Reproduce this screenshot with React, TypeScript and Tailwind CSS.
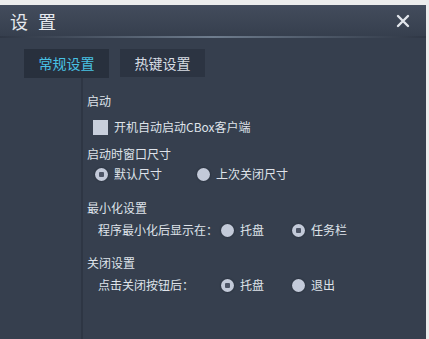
import React, { useState } from "react"

const font = { fontFamily: '"Noto Sans CJK SC", "Liberation Sans", sans-serif' }

const Radio = ({ checked, label, onClick }: { checked: boolean; label: string; onClick: () => void }) => (
  <button onClick={onClick} className="flex items-center gap-[6px] text-left">
    <span className="flex h-[13px] w-[13px] items-center justify-center rounded-full bg-[#c3cad9] shadow-[0_0_2px_#1c222c]">
      {checked && <span className="h-[5px] w-[5px] rounded-[1px] bg-[#4d5566]" />}
    </span>
    <span>{label}</span>
  </button>
)

export default function App() {
  const [tab, setTab] = useState(0)
  const [autoStart, setAutoStart] = useState(false)
  const [winSize, setWinSize] = useState(0)
  const [minTo, setMinTo] = useState(1)
  const [onClose, setOnClose] = useState(0)

  return (
    <div style={font} className="h-[339px] w-[429px] bg-[#ececec] pt-[5px] pr-[3px]">
      <div className="flex h-full flex-col bg-[#363f4e] text-[12px] text-[#dfe3ea]">
        <div className="flex h-[31px] items-center justify-between bg-gradient-to-b from-[#434c5c] to-[#363f4e] pl-[10px] pr-[16px]">
          <div className="flex gap-[10px] text-[18px] leading-none text-[#e6e9ee]">
            <span>设</span>
            <span>置</span>
          </div>
          <svg width="14" height="14" viewBox="0 0 14 14">
            <path d="M2 2 L12 12 M12 2 L2 12" stroke="#e2e6ec" strokeWidth="2.4" strokeLinecap="round" />
          </svg>
        </div>
        <div className="h-[2px] bg-gradient-to-r from-[#2f3745] via-[#6f7d8e] to-[#2f3745]" />

        <div className="flex gap-[11px] pl-[24px] pt-[11px]">
          <button
            onClick={() => setTab(0)}
            className={`h-[29px] w-[85px] text-[14px] ${tab === 0 ? "bg-[#28303d] text-[#48c2e4]" : "bg-[#2c3442] text-[#d8dde4]"}`}
          >
            常规设置
          </button>
          <button
            onClick={() => setTab(1)}
            className={`h-[28px] w-[85px] text-[14px] ${tab === 1 ? "bg-[#28303d] text-[#48c2e4]" : "bg-[#2c3442] text-[#d8dde4]"}`}
          >
            热键设置
          </button>
        </div>

        <div className="flex flex-1">
          <div className="w-[83px] border-r-2 border-[#2e3644]" />
          <div className="flex flex-col pl-[4px] pt-[13px] leading-[20px]">
            <div>启动</div>
            <button onClick={() => setAutoStart(!autoStart)} className="mt-[6px] flex items-center gap-[6px] pl-[6px] text-left">
              <span className="flex h-[15px] w-[15px] items-center justify-center bg-[#c8cfdc] text-[11px] leading-none text-[#3a4250]">
                {autoStart ? "✓" : ""}
              </span>
              <span>开机自动启动CBox客户端</span>
            </button>
            <div className="mt-[7px]">启动时窗口尺寸</div>
            <div className="flex gap-[35px] pl-[8px]">
              <Radio checked={winSize === 0} label="默认尺寸" onClick={() => setWinSize(0)} />
              <Radio checked={winSize === 1} label="上次关闭尺寸" onClick={() => setWinSize(1)} />
            </div>
            <div className="mt-[14px]">最小化设置</div>
            <div className="mt-[2px] flex items-center pl-[11px]">
              <span className="w-[123px]">程序最小化后显示在：</span>
              <div className="flex gap-[28px]">
                <Radio checked={minTo === 0} label="托盘" onClick={() => setMinTo(0)} />
                <Radio checked={minTo === 1} label="任务栏" onClick={() => setMinTo(1)} />
              </div>
            </div>
            <div className="mt-[13px]">关闭设置</div>
            <div className="mt-[2px] flex items-center pl-[11px]">
              <span className="w-[123px]">点击关闭按钮后：</span>
              <div className="flex gap-[28px]">
                <Radio checked={onClose === 0} label="托盘" onClick={() => setOnClose(0)} />
                <Radio checked={onClose === 1} label="退出" onClick={() => setOnClose(1)} />
              </div>
            </div>
          </div>
        </div>
      </div>
    </div>
  )
}
